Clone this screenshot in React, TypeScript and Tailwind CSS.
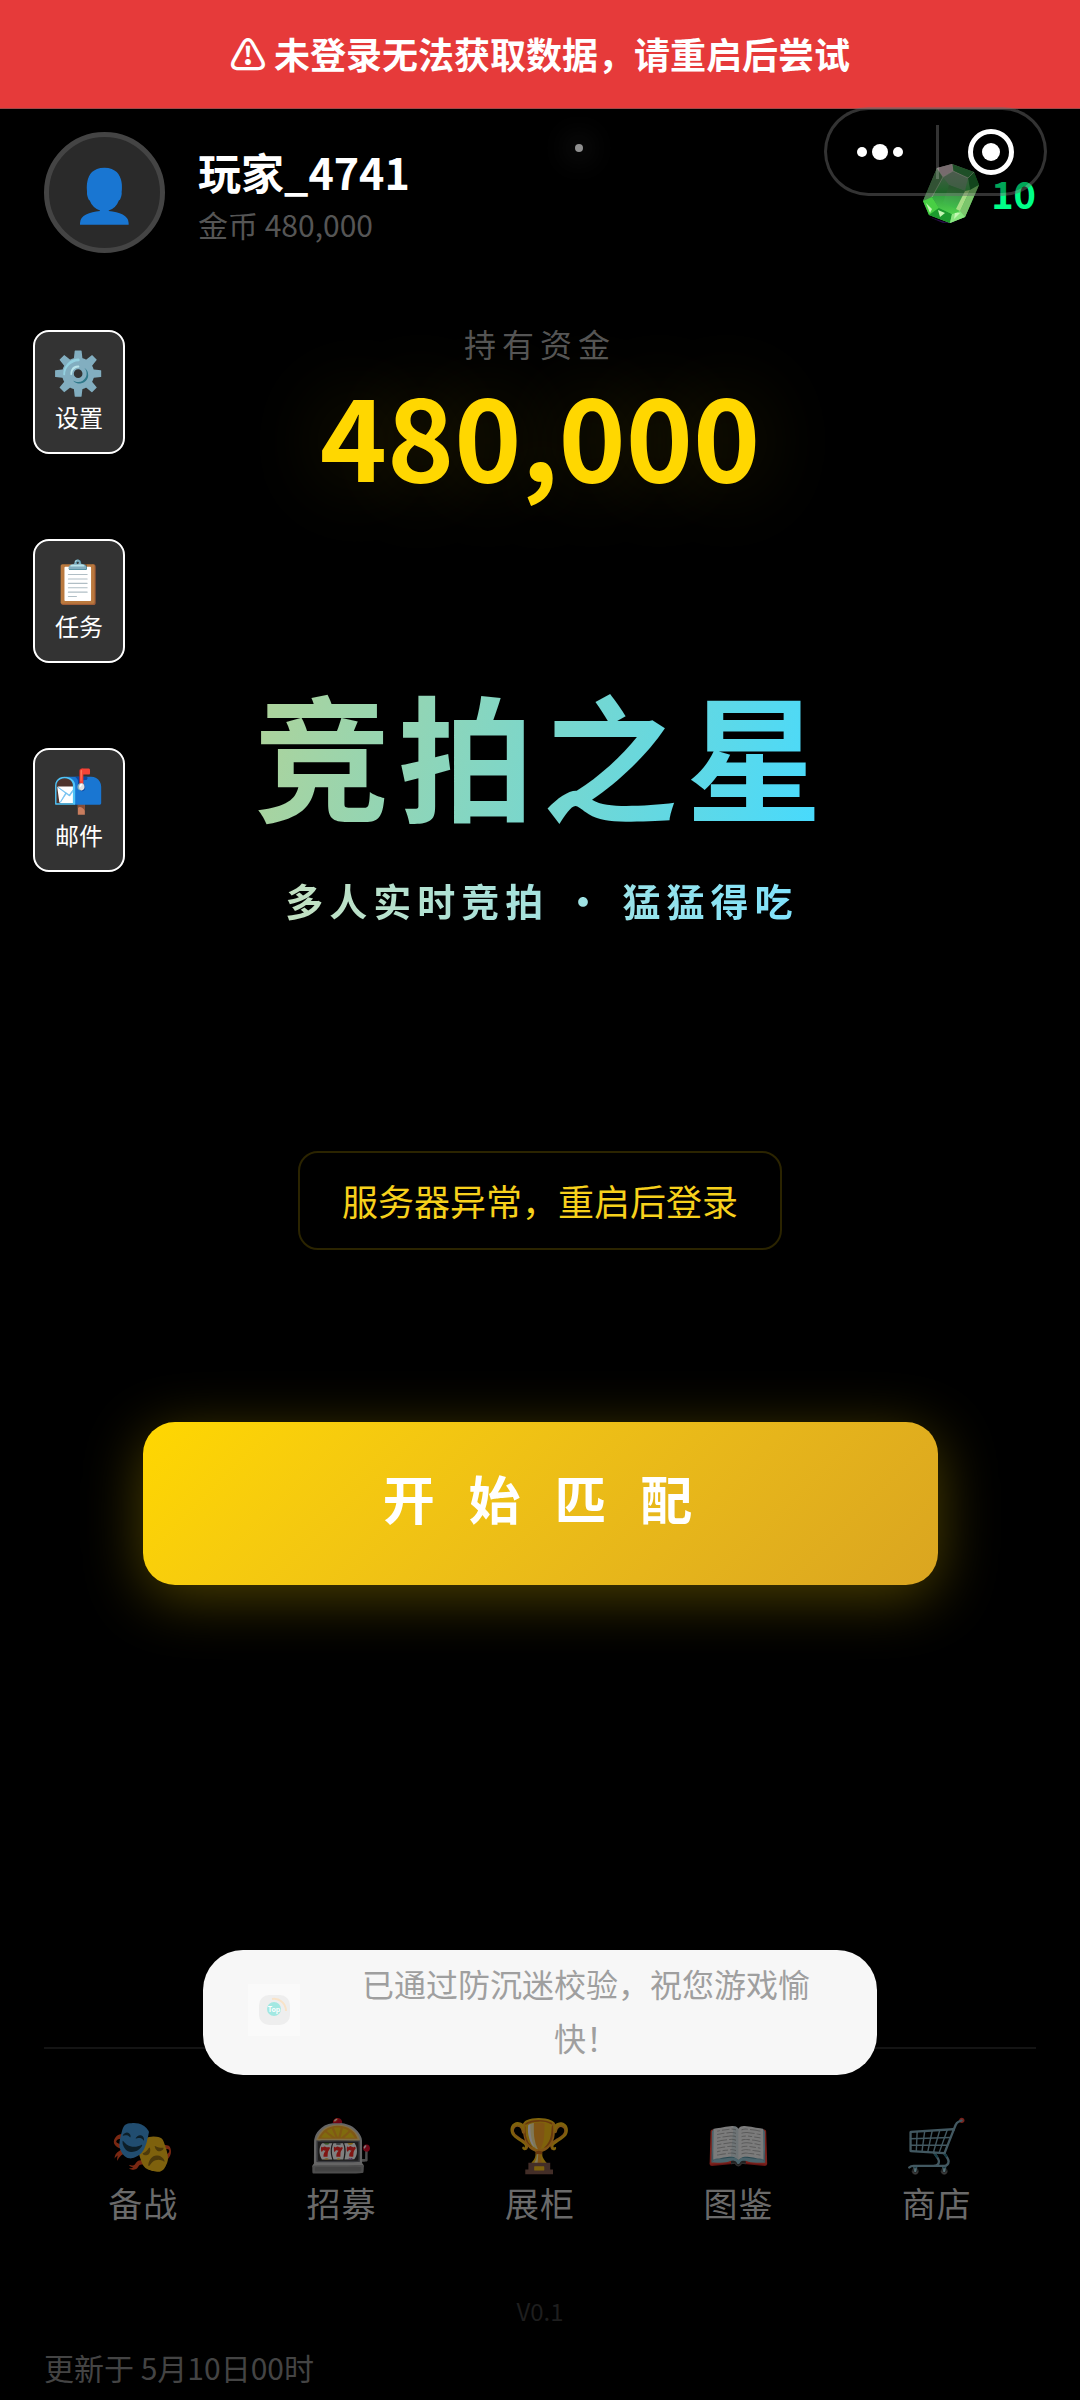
const FONT = '"Noto Sans CJK SC", "Noto Sans", sans-serif';
const EMOJI_FONT = '"Noto Color Emoji", sans-serif';

const shortcuts = [
  { icon: '⚙️', label: '设置' },
  { icon: '📋', label: '任务' },
  { icon: '📬', label: '邮件' },
];

const tabs = [
  { icon: '🎭', label: '备战' },
  { icon: '🎰', label: '招募' },
  { icon: '🏆', label: '展柜' },
  { icon: '📖', label: '图鉴' },
  { icon: '🛒', label: '商店' },
];

function Gem() {
  return (
    <svg viewBox="0 0 56 60" className="h-[60px] w-14" aria-hidden="true">
      <defs>
        <linearGradient id="gemBody" x1="0.3" y1="0" x2="0.6" y2="1">
          <stop offset="0" stopColor="#a99ba0" />
          <stop offset="0.35" stopColor="#2c8a3c" />
          <stop offset="0.7" stopColor="#25b53a" />
          <stop offset="1" stopColor="#7df07a" />
        </linearGradient>
        <linearGradient id="gemTable" x1="0.5" y1="0" x2="0.5" y2="1">
          <stop offset="0" stopColor="#6f8f72" />
          <stop offset="0.5" stopColor="#2f9a3f" />
          <stop offset="1" stopColor="#4fd04c" />
        </linearGradient>
        <linearGradient id="gemCore" x1="0.6" y1="0" x2="0.4" y2="1">
          <stop offset="0" stopColor="#3f7f48" />
          <stop offset="1" stopColor="#3fc24a" />
        </linearGradient>
      </defs>
      <path d="M6 54 L22 59 L34 59 L20 60Z" fill="#2a0d4a" />
      <path d="M29 1 L51 9 L56 22 L42 54 L27 60 L6 52 L0 38 L14 5Z" fill="url(#gemBody)" />
      <path d="M29 1 L51 9 L45 15 L30 8Z" fill="#2f7a3c" />
      <path d="M51 9 L56 22 L47 27 L45 15Z" fill="#1d6b2b" />
      <path d="M14 5 L29 1 L30 8 L20 14Z" fill="#b7a5aa" />
      <path d="M14 5 L20 14 L9 34 L0 38Z" fill="#4d7f50" />
      <path d="M56 22 L47 27 L37 48 L42 54Z" fill="#7cc56c" />
      <path d="M9 34 L0 38 L6 52 L16 45Z" fill="#48cf44" />
      <path d="M16 45 L6 52 L27 60 L29 51Z" fill="#1c9a2e" />
      <path d="M29 51 L27 60 L42 54 L37 48Z" fill="#8ae680" />
      <path d="M30 8 L45 15 L47 27 L37 48 L29 51 L16 45 L9 34 L20 14Z" fill="url(#gemTable)" />
      <path d="M30 8 L45 15 L42 28 L26 22 L20 14Z" fill="#7a8c7c" opacity="0.6" />
      <path d="M26 22 L42 28 L33 46 L20 40Z" fill="url(#gemCore)" />
      <path d="M42 28 L47 27 L37 48 L33 46Z" fill="#a8dc86" />
      <path d="M3 40 L9 46 L7 50Z M15 47 L22 50 L17 54Z M32 50 L37 50 L31 56Z" fill="#c4f7b4" />
      <path d="M29 1 L30 8 L45 15 L51 9 M30 8 L20 14 L14 5 M20 14 L9 34" fill="none" stroke="#d6c9c4" strokeWidth="0.8" opacity="0.6" />
    </svg>
  );
}

function Capsule() {
  return (
    <div className="absolute top-[107px] right-[33px] flex h-[89px] w-[223px] items-center rounded-full border-[3px] border-white/20 bg-black/35">
      <button type="button" aria-label="更多" className="flex h-full flex-1 items-center justify-center gap-[5px] pr-[3px]">
        <span className="size-[10px] rounded-full bg-white" />
        <span className="size-4 rounded-full bg-white" />
        <span className="size-[10px] rounded-full bg-white" />
      </button>
      <span className="h-[54px] w-[3px] bg-white/20" />
      <button type="button" aria-label="关闭" className="flex h-full flex-1 items-center justify-center">
        <span className="flex size-[46px] items-center justify-center rounded-full border-[5px] border-white">
          <span className="size-[18px] rounded-full bg-white" />
        </span>
      </button>
    </div>
  );
}

function ToastIcon() {
  return (
    <svg viewBox="0 0 52 52" className="size-[52px] shrink-0 bg-[#fafafa]" aria-hidden="true">
      <rect x="11" y="11" width="31" height="30" rx="10" fill="#eeeeee" />
      <path d="M24 15 A12 12 0 0 1 38 27" fill="none" stroke="#f8e3c8" strokeWidth="2" />
      <circle cx="26" cy="25" r="7" fill="#a3e8e2" />
      <text x="26" y="28" textAnchor="middle" fontSize="7" fontWeight="700" fill="#ffffff">
        Top
      </text>
    </svg>
  );
}

export default function App() {
  return (
    <div
      className="relative flex min-h-screen flex-col overflow-hidden bg-black text-white"
      style={{ fontFamily: FONT }}
    >
      <div role="alert" className="border-b border-[#a04848] bg-[#e63a3a] pt-[26px] pb-7 text-center text-4xl/[54px] font-bold">
        ⚠ 未登录无法获取数据，请重启后尝试
      </div>

      <header className="flex items-center justify-between px-11 pt-[23px]">
        <div className="flex items-center gap-[33px]">
          <div
            className="flex size-[121px] items-center justify-center rounded-full border-[5px] border-[#444] bg-[#2a2a2a] pt-2 text-[52px]/[62px]"
            style={{ fontFamily: EMOJI_FONT }}
          >
            👤
          </div>
          <div>
            <h2 className="text-[43px]/[62px] font-bold">玩家_4741</h2>
            <p className="text-[30px]/[44px] text-[#555]">金币 480,000</p>
          </div>
        </div>
        <div className="flex items-center gap-3">
          <Gem />
          <span className="text-[38px]/[60px] font-bold text-[#00ff88]">10</span>
        </div>
      </header>

      <span className="absolute top-36 left-[575px] size-2 rounded-full bg-[#8f8f8f] shadow-[0_0_30px_6px_rgba(255,255,255,0.13)]" />
      <Capsule />

      <nav aria-label="快捷入口" className="absolute top-[330px] left-[33px] flex flex-col gap-[85px]">
        {shortcuts.map((s) => (
          <button
            key={s.label}
            type="button"
            className="flex h-[124px] w-[92px] flex-col items-center justify-center rounded-2xl border-2 border-white bg-[#333]"
          >
            <span className="text-[42px]/[50px]" style={{ fontFamily: EMOJI_FONT }}>
              {s.icon}
            </span>
            <span className="text-2xl/[36px]">{s.label}</span>
          </button>
        ))}
      </nav>

      <main className="flex flex-col items-center">
        <p className="mt-[66px] text-[32px]/[48px] tracking-[6px] text-[#555]">持有资金</p>
        <p className="mt-1.5 text-[114px]/[120px] font-bold text-[#ffd700] [text-shadow:0_0_86px_rgba(255,215,0,0.2)]">
          480,000
        </p>
        <h1 className="mt-[180px] bg-[linear-gradient(105deg,#b0d398,#45daff)] bg-clip-text pl-1 text-[136px]/[160px] font-bold tracking-[8px] text-transparent">
          竞拍之星
        </h1>
        <p className="mt-[39px] bg-linear-to-r from-[#c3e0c0] to-[#7fe2fb] bg-clip-text pl-1 text-[38px]/[56px] font-bold tracking-[6px] text-transparent">
          多人实时竞拍 • 猛猛得吃
        </p>
        <p
          role="status"
          className="mt-[223px] rounded-[20px] border-2 border-[#2b2400] px-[42px] py-5 text-4xl/[55px] text-[#f7d11c]"
        >
          服务器异常，重启后登录
        </p>
        <button
          type="button"
          className="mt-[172px] w-[795px] max-w-[90%] rounded-[32px] bg-linear-135 from-[#ffd700] to-[#daa520] pt-[34px] pb-[46px] pl-1.5 text-[52px]/[83px] font-bold tracking-[11px] text-white shadow-[0_12px_60px_rgba(255,215,0,0.3)]"
        >
          开 始 匹 配
        </button>
      </main>

      <footer className="mt-auto flex flex-col px-11 pb-[11px]">
        <nav aria-label="主导航" className="flex border-t-2 border-[#141414] pt-[67px]">
          {tabs.map((t) => (
            <button key={t.label} type="button" className="flex flex-1 flex-col items-center">
              <span className="text-[52px]/[62px] opacity-50" style={{ fontFamily: EMOJI_FONT }}>
                {t.icon}
              </span>
              <span className="text-[34px]/[50px] tracking-[1px] text-[#6a6a6a]">{t.label}</span>
            </button>
          ))}
        </nav>
        <p className="mt-[65px] text-center text-2xl/[36px] text-[#1e1e1e]">V0.1</p>
        <p className="mt-4 text-[30px]/[44px] text-[#444]">更新于 5月10日00时</p>
      </footer>

      <div
        role="status"
        className="absolute bottom-[325px] left-1/2 flex w-[674px] -translate-x-1/2 items-center gap-10 rounded-[40px] bg-[#f7f7f7] px-[45px] pt-[6px] pb-[11px] text-[#9f9f9f]"
      >
        <ToastIcon />
        <p className="flex-1 text-center text-[32px]/[54px]">已通过防沉迷校验，祝您游戏愉快！</p>
      </div>
    </div>
  );
}
